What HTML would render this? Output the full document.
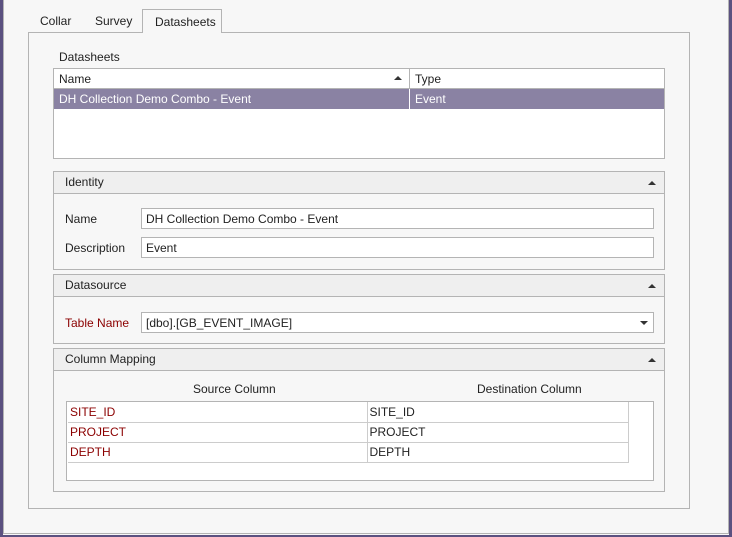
<!DOCTYPE html>
<html><head><style>
*{box-sizing:border-box;margin:0;padding:0}
body{width:732px;height:537px;background:#f7f7f7;font-family:"Liberation Sans",sans-serif;font-size:12px;color:#222;position:relative;overflow:hidden}
.a{position:absolute}
.b{border:1px solid #b4b4b4}
.hdr{background:#efefef;border-bottom:1px solid #b4b4b4;height:22px;line-height:21px;padding-left:11px;position:relative}
.up{position:absolute;right:8px;top:9px;width:0;height:0;border-left:4px solid transparent;border-right:4px solid transparent;border-bottom:4px solid #333}
.in{background:#fff;border:1px solid #b4b4b4;line-height:20px;padding-left:4px}
.red{color:#8b0000}
</style></head><body>
<div class="a" style="left:0;top:0;width:3px;height:537px;background:#5b5180"></div>
<div class="a" style="right:0;top:0;width:3px;height:537px;background:#5b5180"></div>
<div class="a" style="left:0;bottom:0;width:732px;height:2px;background:#5b5180"></div>
<div class="a" style="left:3px;top:-1px;width:726px;height:535px;border:1px solid #b4b4b4;border-top:none"></div>
<div class="a" style="left:40px;top:14px">Collar</div>
<div class="a" style="left:95px;top:14px">Survey</div>
<div class="a b" style="left:28px;top:32px;width:662px;height:477px;background:#f7f7f7"></div>
<div class="a b" style="left:142px;top:9px;width:80px;height:24px;border-bottom:none;background:#f7f7f7;padding:5px 0 0 12px">Datasheets</div>
<div class="a" style="left:59px;top:50px">Datasheets</div>
<div class="a b" style="left:53px;top:68px;width:612px;height:91px;background:#fff">
 <div style="height:20px;border-bottom:1px solid #b4b4b4;line-height:20px;position:relative"><span style="padding-left:5px">Name</span><span class="a" style="left:355px;top:0;height:20px;border-left:1px solid #b4b4b4;padding-left:5px">Type</span><div class="a" style="left:340px;top:7px;border-left:4px solid transparent;border-right:4px solid transparent;border-bottom:4px solid #333"></div></div>
 <div style="height:20px;background:#8a82a3;color:#fff;line-height:21px;position:relative"><span style="padding-left:5px">DH Collection Demo Combo - Event</span><span class="a" style="left:355px;top:0;height:20px;border-left:1px solid #fff;padding-left:5px">Event</span></div>
</div>
<div class="a b" style="left:53px;top:171px;width:612px;height:99px">
 <div class="hdr">Identity<div class="up"></div></div>
 <div class="a" style="left:11px;top:40px">Name</div>
 <div class="a in" style="left:87px;top:36px;width:513px;height:21px">DH Collection Demo Combo - Event</div>
 <div class="a" style="left:11px;top:69px">Description</div>
 <div class="a in" style="left:87px;top:65px;width:513px;height:21px">Event</div>
</div>
<div class="a b" style="left:53px;top:274px;width:612px;height:70px">
 <div class="hdr">Datasource<div class="up"></div></div>
 <div class="a red" style="left:11px;top:41px">Table Name</div>
 <div class="a in" style="left:87px;top:37px;width:513px;height:21px">[dbo].[GB_EVENT_IMAGE]<div class="a" style="right:5px;top:8px;border-left:4px solid transparent;border-right:4px solid transparent;border-top:4px solid #333"></div></div>
</div>
<div class="a b" style="left:53px;top:348px;width:612px;height:144px">
 <div class="hdr">Column Mapping<div class="up"></div></div>
 <div class="a" style="left:139px;top:33px">Source Column</div>
 <div class="a" style="left:423px;top:33px">Destination Column</div>
 <div class="a b" style="left:12px;top:52px;width:588px;height:80px;background:#fff">
  <table style="border-collapse:collapse;width:561px;margin-left:1px;font-size:12px">
   <tr style="height:20px"><td class="red" style="width:299px;border-right:1px solid #ccc;border-bottom:1px solid #ccc;padding-left:2px">SITE_ID</td><td style="border-right:1px solid #ccc;border-bottom:1px solid #ccc;padding-left:2px">SITE_ID</td></tr>
   <tr style="height:20px"><td class="red" style="border-right:1px solid #ccc;border-bottom:1px solid #ccc;padding-left:2px">PROJECT</td><td style="border-right:1px solid #ccc;border-bottom:1px solid #ccc;padding-left:2px">PROJECT</td></tr>
   <tr style="height:20px"><td class="red" style="border-right:1px solid #ccc;border-bottom:1px solid #ccc;padding-left:2px">DEPTH</td><td style="border-right:1px solid #ccc;border-bottom:1px solid #ccc;padding-left:2px">DEPTH</td></tr>
  </table>
 </div>
</div>
</body></html>
